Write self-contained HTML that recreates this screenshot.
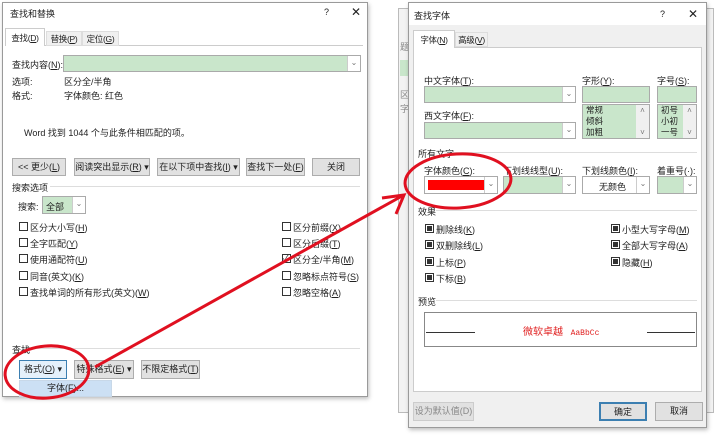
<!DOCTYPE html>
<html><head><meta charset="utf-8"><style>
*{margin:0;padding:0;box-sizing:border-box}
body{width:720px;height:442px;background:#fff;position:relative;overflow:hidden;font-family:"Liberation Sans","Noto Sans CJK SC",sans-serif;font-size:9px;color:#222}
.a{position:absolute;white-space:nowrap}
.dlg{position:absolute;background:#fff;border:1px solid #9a9a9a;box-shadow:1px 2px 4px rgba(0,0,0,.25)}
.btn{position:absolute;background:#e1e1e1;border:1px solid #adadad;text-align:center;line-height:16px;font-size:9px}
.g{position:absolute;background:#c9e6cb;border:1px solid #aaa}
.dd{position:absolute;background:#fff;border-left:1px solid #ccc;width:13px;top:0;bottom:0;right:0;text-align:center;color:#777;font-size:8px;line-height:14px}
.cb{position:absolute;width:9px;height:9px;border:1px solid #333;background:#fff}
.cbf{position:absolute;width:9px;height:9px;border:1px solid #333;background:#fff}
.cbf:after{content:"";position:absolute;left:1px;top:1px;width:5px;height:5px;background:#333}
.hr{position:absolute;height:1px;background:#ddd}
.tab{position:absolute;text-align:center;font-size:8.5px;letter-spacing:-0.3px}
</style></head><body>

<!-- left dialog -->
<div class="dlg" style="left:2px;top:2px;width:366px;height:395px"></div>
<div class="a" style="left:10px;top:7px">查找和替换</div>
<div class="a" style="left:324px;top:7px">?</div>
<div class="a" style="left:351px;top:5px;font-size:12px">✕</div>
<div class="hr" style="left:5px;top:45px;width:358px;background:#ccc"></div>
<div class="tab" style="left:5px;top:28px;width:40px;height:18px;border:1px solid #ccc;border-bottom:none;background:#fff;line-height:18px">查找(<u>D</u>)</div>
<div class="tab" style="left:46px;top:31px;width:36px;height:15px;background:#f0f0f0;border:1px solid #ddd;line-height:14px">替换(<u>P</u>)</div>
<div class="tab" style="left:82px;top:31px;width:37px;height:15px;background:#f0f0f0;border:1px solid #ddd;line-height:14px">定位(<u>G</u>)</div>
<div class="a" style="left:12px;top:58px">查找内容(<u>N</u>):</div>
<div class="g" style="left:63px;top:55px;width:298px;height:17px"><div class="dd">⌄</div></div>
<div class="a" style="left:12px;top:75px">选项:</div><div class="a" style="left:64px;top:75px">区分全/半角</div>
<div class="a" style="left:12px;top:89px">格式:</div><div class="a" style="left:64px;top:89px">字体颜色: 红色</div>
<div class="a" style="left:24px;top:126px">Word 找到 1044 个与此条件相匹配的项。</div>
<div class="btn" style="left:12px;top:158px;width:54px;height:18px">&lt;&lt; 更少(<u>L</u>)</div>
<div class="btn" style="left:74px;top:158px;width:76px;height:18px">阅读突出显示(<u>R</u>) ▾</div>
<div class="btn" style="left:157px;top:158px;width:83px;height:18px">在以下项中查找(<u>I</u>) ▾</div>
<div class="btn" style="left:246px;top:158px;width:59px;height:18px">查找下一处(<u>F</u>)</div>
<div class="btn" style="left:312px;top:158px;width:48px;height:18px">关闭</div>
<div class="a" style="left:12px;top:181px">搜索选项</div>
<div class="hr" style="left:50px;top:186px;width:310px"></div>
<div class="a" style="left:18px;top:200px">搜索:</div>
<div class="g" style="left:42px;top:196px;width:44px;height:18px;padding:3px 0 0 3px">全部<div class="dd">⌄</div></div>
<div class="cb" style="left:19px;top:222px"></div><div class="a" style="left:30px;top:221px">区分大小写(<u>H</u>)</div>
<div class="cb" style="left:19px;top:238px"></div><div class="a" style="left:30px;top:237px">全字匹配(<u>Y</u>)</div>
<div class="cb" style="left:19px;top:254px"></div><div class="a" style="left:30px;top:253px">使用通配符(<u>U</u>)</div>
<div class="cb" style="left:19px;top:271px"></div><div class="a" style="left:30px;top:270px">同音(英文)(<u>K</u>)</div>
<div class="cb" style="left:19px;top:287px"></div><div class="a" style="left:30px;top:286px">查找单词的所有形式(英文)(<u>W</u>)</div>
<div class="cb" style="left:282px;top:222px"></div><div class="a" style="left:293px;top:221px">区分前缀(<u>X</u>)</div>
<div class="cb" style="left:282px;top:238px"></div><div class="a" style="left:293px;top:237px">区分后缀(<u>T</u>)</div>
<div class="cb" style="left:282px;top:254px;font-size:8px;line-height:7px">✓</div><div class="a" style="left:293px;top:253px">区分全/半角(<u>M</u>)</div>
<div class="cb" style="left:282px;top:271px"></div><div class="a" style="left:293px;top:270px">忽略标点符号(<u>S</u>)</div>
<div class="cb" style="left:282px;top:287px"></div><div class="a" style="left:293px;top:286px">忽略空格(<u>A</u>)</div>
<div class="a" style="left:12px;top:343px">查找</div>
<div class="hr" style="left:30px;top:348px;width:330px"></div>
<div class="btn" style="left:19px;top:360px;width:48px;height:19px;border-color:#3c7fb1;background:#e5f1fb">格式(<u>O</u>) ▾</div>
<div class="btn" style="left:74px;top:360px;width:60px;height:19px">特殊格式(<u>E</u>) ▾</div>
<div class="btn" style="left:141px;top:360px;width:59px;height:19px">不限定格式(<u>T</u>)</div>
<div class="a" style="left:19px;top:380px;width:93px;height:17px;background:#cce0f4;border:1px solid #c8d8e8;text-align:center;line-height:15px">字体(<u>F</u>)...</div>

<!-- background window behind right dialog -->
<div class="a" style="left:398px;top:8px;width:316px;height:405px;background:#f3f3f3;border:1px solid #bbb"></div>
<div class="a" style="left:400px;top:40px;color:#888">题</div>
<div class="a" style="left:400px;top:60px;width:8px;height:16px;background:#c9e6cb"></div>
<div class="a" style="left:400px;top:88px;color:#888">区</div>
<div class="a" style="left:400px;top:102px;color:#888">字</div>

<!-- right dialog -->
<div class="dlg" style="left:408px;top:2px;width:299px;height:426px;background:#f0f0f0"></div>
<div class="a" style="left:409px;top:3px;width:297px;height:22px;background:#fff"></div>
<div class="a" style="left:414px;top:9px">查找字体</div>
<div class="a" style="left:660px;top:9px">?</div>
<div class="a" style="left:688px;top:7px;font-size:12px">✕</div>
<div class="a" style="left:413px;top:47px;width:289px;height:345px;background:#fff;border:1px solid #ccc"></div>
<div class="tab" style="left:413px;top:30px;width:42px;height:18px;background:#fff;border:1px solid #ccc;border-bottom:none;line-height:18px">字体(<u>N</u>)</div>
<div class="tab" style="left:455px;top:32px;width:33px;height:15px;border:1px solid #ddd;line-height:14px">高级(<u>V</u>)</div>
<div class="a" style="left:424px;top:74px">中文字体(<u>T</u>):</div>
<div class="g" style="left:424px;top:86px;width:152px;height:17px"><div class="dd">⌄</div></div>
<div class="a" style="left:582px;top:74px">字形(<u>Y</u>):</div>
<div class="g" style="left:582px;top:86px;width:68px;height:17px"></div>
<div class="g" style="left:582px;top:104px;width:68px;height:35px;line-height:11px;padding:0 0 0 3px;font-size:8.5px;overflow:hidden">常规<br>倾斜<br>加粗<div class="dd" style="background:#f0f0f0;border:none;line-height:11px">˄<br>&nbsp;<br>˅</div></div>
<div class="a" style="left:657px;top:74px">字号(<u>S</u>):</div>
<div class="g" style="left:657px;top:86px;width:40px;height:17px"></div>
<div class="g" style="left:657px;top:104px;width:40px;height:35px;line-height:11px;padding:0 0 0 3px;font-size:8.5px;overflow:hidden">初号<br>小初<br>一号<div class="dd" style="background:#f0f0f0;border:none;line-height:11px">˄<br>&nbsp;<br>˅</div></div>
<div class="a" style="left:424px;top:109px">西文字体(<u>F</u>):</div>
<div class="g" style="left:424px;top:122px;width:152px;height:17px"><div class="dd">⌄</div></div>
<div class="a" style="left:418px;top:147px">所有文字</div>
<div class="hr" style="left:452px;top:152px;width:245px"></div>
<div class="a" style="left:424px;top:164px">字体颜色(<u>C</u>):</div>
<div class="a" style="left:424px;top:176px;width:74px;height:18px;border:1px solid #aaa;background:#fff"><div style="position:absolute;left:3px;top:3px;width:56px;height:10px;background:#f00"></div><div class="dd">⌄</div></div>
<div class="a" style="left:503px;top:164px">下划线线型(<u>U</u>):</div>
<div class="g" style="left:503px;top:176px;width:73px;height:18px"><div class="dd">⌄</div></div>
<div class="a" style="left:582px;top:164px">下划线颜色(<u>I</u>):</div>
<div class="a" style="left:582px;top:176px;width:68px;height:18px;border:1px solid #aaa;background:#fff;padding:3px 0 0 16px">无颜色<div class="dd">⌄</div></div>
<div class="a" style="left:657px;top:164px">着重号(·):</div>
<div class="g" style="left:657px;top:176px;width:40px;height:18px"><div class="dd">⌄</div></div>
<div class="a" style="left:418px;top:205px">效果</div>
<div class="hr" style="left:436px;top:210px;width:261px"></div>
<div class="cbf" style="left:425px;top:224px"></div><div class="a" style="left:436px;top:223px">删除线(<u>K</u>)</div>
<div class="cbf" style="left:425px;top:240px"></div><div class="a" style="left:436px;top:239px">双删除线(<u>L</u>)</div>
<div class="cbf" style="left:425px;top:257px"></div><div class="a" style="left:436px;top:256px">上标(<u>P</u>)</div>
<div class="cbf" style="left:425px;top:273px"></div><div class="a" style="left:436px;top:272px">下标(<u>B</u>)</div>
<div class="cbf" style="left:611px;top:224px"></div><div class="a" style="left:622px;top:223px">小型大写字母(<u>M</u>)</div>
<div class="cbf" style="left:611px;top:240px"></div><div class="a" style="left:622px;top:239px">全部大写字母(<u>A</u>)</div>
<div class="cbf" style="left:611px;top:257px"></div><div class="a" style="left:622px;top:256px">隐藏(<u>H</u>)</div>
<div class="a" style="left:418px;top:295px">预览</div>
<div class="hr" style="left:436px;top:300px;width:261px"></div>
<div class="a" style="left:424px;top:312px;width:273px;height:35px;border:1px solid #888;background:#fff"></div>
<div class="a" style="left:426px;top:332px;width:49px;height:1px;background:#333"></div>
<div class="a" style="left:647px;top:332px;width:48px;height:1px;background:#333"></div>
<div class="a" style="left:523px;top:323px;color:#e02020;font-size:10px">微软卓越 <span style="font-family:'Liberation Mono',monospace;font-size:8px">&nbsp;AaBbCc</span></div>
<div class="btn" style="left:413px;top:402px;width:61px;height:19px;color:#888;border-color:#ccc">设为默认值(D)</div>
<div class="btn" style="left:599px;top:402px;width:48px;height:19px;border:2px solid #3c7fb1">确定</div>
<div class="btn" style="left:655px;top:402px;width:48px;height:19px">取消</div>

<!-- annotations -->
<svg class="a" style="left:0;top:0" width="720" height="442">
<ellipse cx="47" cy="372" rx="42" ry="26" fill="none" stroke="#e01020" stroke-width="3" transform="rotate(-5 47 372)"/>
<ellipse cx="458" cy="181" rx="53" ry="27" fill="none" stroke="#e01020" stroke-width="3" transform="rotate(-3 458 181)"/>
<line x1="95" y1="367" x2="402" y2="196" stroke="#e01020" stroke-width="3"/>
<polyline points="382,198 404,195 396,214" fill="none" stroke="#e01020" stroke-width="3"/>
</svg>
</body></html>
